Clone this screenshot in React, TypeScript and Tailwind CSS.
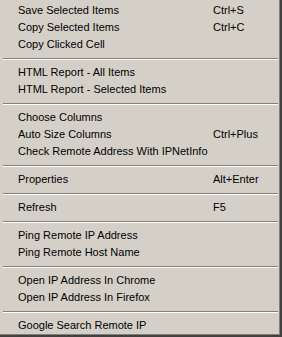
const groups: [string, string?][][] = [
  [["Save Selected Items", "Ctrl+S"], ["Copy Selected Items", "Ctrl+C"], ["Copy Clicked Cell"]],
  [["HTML Report - All Items"], ["HTML Report - Selected Items"]],
  [["Choose Columns"], ["Auto Size Columns", "Ctrl+Plus"], ["Check Remote Address With IPNetInfo"]],
  [["Properties", "Alt+Enter"]],
  [["Refresh", "F5"]],
  [["Ping Remote IP Address"], ["Ping Remote Host Name"]],
  [["Open IP Address In Chrome"], ["Open IP Address In Firefox"]],
  [["Google Search Remote IP"]],
];

function Separator() {
  return (
    <div className="h-[11px] ml-[3px] mr-[1px] pt-[5px]">
      <div className="h-px bg-[#808080]" />
      <div className="h-px bg-white" />
    </div>
  );
}

export default function App() {
  return (
    <div className="w-[282px] h-[337px] border-r-2 border-b-2 border-[#404040] bg-[#d4d0c8]">
      <div
        className="h-full border-r border-b border-[#808080] pt-[2px] text-[11px] text-black"
        style={{ fontFamily: '"Liberation Sans", Arial, sans-serif' }}
      >
        {groups.map((items, gi) => (
          <div key={gi}>
            {gi > 0 && <Separator />}
            {items.map(([label, shortcut]) => (
              <div key={label} className="h-[17px] grid grid-cols-[195px_1fr] items-center pl-[18px] leading-none whitespace-nowrap">
                <span>{label}</span>
                <span>{shortcut}</span>
              </div>
            ))}
          </div>
        ))}
      </div>
    </div>
  );
}
